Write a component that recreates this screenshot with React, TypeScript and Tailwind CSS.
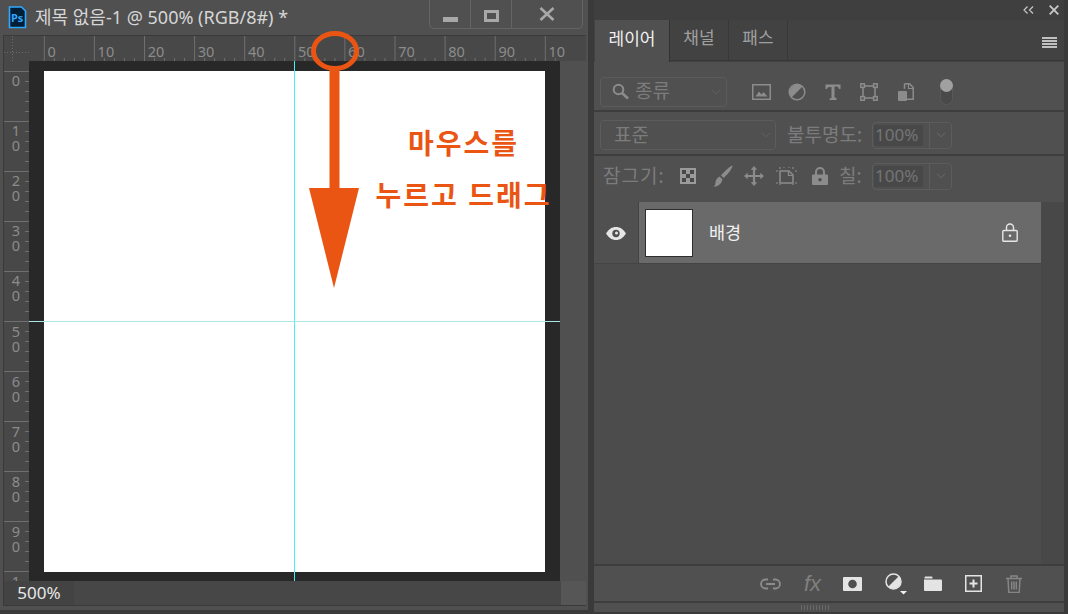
const orange = "#ea5514";

function HRuler() {
  const majors = [0, 1, 2, 3, 4, 5, 6, 7, 8, 9, 10];
  const labels = ["0", "10", "20", "30", "40", "50", "60", "70", "80", "90", "10"];
  return (
    <svg width="557" height="25" className="block">
      {Array.from({ length: 52 }).map((_, i) => (
        <line key={i} x1={15.3 + i * 10.02} x2={15.3 + i * 10.02} y1={i % 5 === 0 ? 0 : 22} y2={25} stroke="#6f6f6f" />
      ))}
      {majors.map((m) => (
        <text key={m} x={18.5 + m * 50.1} y={21} fontSize="14.5" fill="#8c8c8c">
          {labels[m]}
        </text>
      ))}
    </svg>
  );
}

function VRuler() {
  const rows = [["0"], ["1", "0"], ["2", "0"], ["3", "0"], ["4", "0"], ["5", "0"], ["6", "0"], ["7", "0"], ["8", "0"], ["9", "0"], ["1"]];
  return (
    <svg width="25" height="520" className="block shrink-0">
      {Array.from({ length: 52 }).map((_, i) => (
        <line key={i} y1={10.5 + i * 10} y2={10.5 + i * 10} x1={i % 5 === 0 ? 0 : 21} x2={25} stroke="#6f6f6f" />
      ))}
      {rows.map((r, i) =>
        r.map((d, j) => (
          <text key={`${i}-${j}`} x={12} y={25 + i * 50.1 + j * 15} fontSize="14.5" fill="#8c8c8c" textAnchor="middle">
            {d}
          </text>
        ))
      )}
    </svg>
  );
}

function Chevron({ color = "#6c6c6c" }: { color?: string }) {
  return (
    <svg width="10" height="6" viewBox="0 0 10 6" fill="none" stroke={color} strokeWidth="1">
      <path d="M1 .8l4 4 4-4" />
    </svg>
  );
}

function PercentField() {
  return (
    <div className="flex h-[27px] w-[80px] shrink-0 items-center rounded-[4px] border border-[#5c5c5c]">
      <div className="ml-[1px] flex h-[21px] w-[49px] items-center bg-[#484848] pl-[1px] text-[17px] text-[#757575]">100%</div>
      <div className="ml-[6px] h-full w-px bg-[#5c5c5c]" />
      <div className="flex flex-1 justify-center">
        <Chevron />
      </div>
    </div>
  );
}

function Tab({ label, active }: { label: string; active?: boolean }) {
  return (
    <div
      className={
        active
          ? "flex h-[42px] w-[75px] items-center justify-center border-r border-[#333333] bg-[#505050] pb-[4px] text-[17px] text-[#f0f0f0]"
          : "flex h-[41px] w-[59px] items-center justify-center border-r border-b border-[#383838] bg-[#424242] pb-[4px] text-[17px] text-[#a0a0a0]"
      }
    >
      {label}
    </div>
  );
}

const g = "#8c8c8c";

export default function App() {
  return (
    <div className="relative flex h-[614px] w-[1068px] overflow-hidden bg-[#3a3a3a] font-['Noto_Sans','Noto_Sans_CJK_KR',sans-serif]">
      {/* document window */}
      <section className="flex h-[611px] w-[590px] shrink-0 flex-col border-r-2 border-b border-[#3a3a3a] bg-[#505050] pb-[4px] pl-[3px] pr-[2px]">
        <header className="relative flex h-[35px] shrink-0 items-center pl-[5px]">
          <svg width="19" height="23" viewBox="0 0 19 23" className="shrink-0">
            <path d="M1.5 1h12l4 4v16.5h-16z" fill="#001e36" stroke="#31a8ff" strokeWidth="1.6" />
            <text x="3" y="16" fontSize="11" fontWeight="700" fill="#31a8ff">Ps</text>
          </svg>
          <span className="ml-[8px] text-[18px] whitespace-nowrap text-[#d6d6d6]">제목 없음-1 @ 500% (RGB/8#) *</span>
          <div className="absolute top-0 left-[426px] flex h-[29px] w-[154px] rounded-b-[5px] border border-t-0 border-[#646464]">
            <div className="flex w-[41px] items-end justify-center border-r border-[#646464] pb-[6px]">
              <div className="h-[5px] w-[15px] bg-[#a8a8a8]" />
            </div>
            <div className="flex w-[41px] items-end justify-center border-r border-[#646464] pb-[6px]">
              <div className="h-[12px] w-[15px] border-[3px] border-[#a8a8a8]" />
            </div>
            <div className="flex flex-1 items-end justify-center pr-[1px] pb-[7px]">
              <svg width="16" height="14" viewBox="0 0 16 14" stroke="#a8a8a8" strokeWidth="2.6">
                <path d="M1.5 1l13 12M14.5 1l-13 12" />
              </svg>
            </div>
          </div>
        </header>

        <div className="flex min-h-0 flex-1 flex-col border-t border-l border-[#3a3a3a]">
          <div className="flex h-[25px] shrink-0 bg-[#484848]">
            <svg width="25" height="25" className="shrink-0">
              <path d="M8.5 0v25M0 16.5h25" stroke="#6c6c6c" strokeDasharray="1 2" />
            </svg>
            <HRuler />
          </div>
          <div className="flex min-h-0 flex-1">
            <div className="bg-[#484848]">
              <VRuler />
            </div>
            <div className="relative flex h-[520px] w-[531px] shrink-0 items-center justify-center bg-[#282828]">
              <div className="h-[501px] w-[501px] bg-white" />
              <div className="absolute top-0 left-[265px] h-full w-px bg-[#45f0f0]" />
              <div className="absolute top-[260px] left-0 h-px w-full bg-[#a9e6e6]" />
            </div>
            <div className="flex-1 bg-[#505050]" />
          </div>
          <div className="flex h-[25px] shrink-0 border-b border-[#3a3a3a] bg-[#474747]">
            <div className="flex w-[70px] items-center justify-center bg-[#434343] text-[17px] text-[#e8e8e8]">500%</div>
            <div className="flex-1" />
            <div className="w-[25px] bg-[#565656]" />
          </div>
        </div>
      </section>

      {/* layers panel */}
      <aside className="ml-[4px] flex h-[612px] w-[470px] shrink-0 flex-col bg-[#505050]">
        <div className="flex h-[20px] shrink-0 items-center justify-end gap-[15px] bg-[#3f3f3f] pr-[5px]">
          <svg width="11" height="8" viewBox="0 0 11 8" fill="none" stroke="#c8c8c8" strokeWidth="1.2">
            <path d="M4.5 .5L1 4l3.5 3.5M10 .5L6.5 4 10 7.5" />
          </svg>
          <svg width="10" height="10" viewBox="0 0 10 10" stroke="#c8c8c8" strokeWidth="1.8">
            <path d="M.7.7l8.6 8.6M9.3.7L.7 9.3" />
          </svg>
        </div>
        <div className="flex h-[42px] shrink-0 items-start bg-[#424242]">
          <div className="w-[1px] self-stretch" />
          <Tab label="레이어" active />
          <Tab label="채널" />
          <Tab label="패스" />
          <div className="h-[41px] flex-1 border-b border-[#383838]" />
          <div className="absolute top-[37px] left-[1042px] flex w-[15px] flex-col gap-[1px]">
            <div className="h-[2px] bg-[#c0c0c0]" />
            <div className="h-[2px] bg-[#c0c0c0]" />
            <div className="h-[2px] bg-[#c0c0c0]" />
            <div className="h-[2px] bg-[#c0c0c0]" />
          </div>
        </div>

        {/* filter */}
        <div className="flex h-[50px] shrink-0 items-center border-b-2 border-[#3d3d3d] pt-[11px] pl-[6px]">
          <div className="flex h-[30px] w-[127px] shrink-0 items-center rounded-[4px] border border-[#5c5c5c] pl-[11px] pr-[5px] text-[19px] text-[#7c7c7c]">
            <svg width="17" height="17" viewBox="0 0 17 17" fill="none" stroke={g} strokeWidth="2" className="shrink-0">
              <circle cx="6.5" cy="6.5" r="4.8" />
              <path d="M10 10l6 5.5" strokeWidth="2.6" />
            </svg>
            <span className="ml-[6px] flex-1">종류</span>
            <Chevron color="#626262" />
          </div>
          <svg width="19" height="16" viewBox="0 0 19 16" className="ml-[25px] shrink-0">
            <rect x=".75" y=".75" width="17.5" height="14.5" fill="none" stroke={g} strokeWidth="1.5" />
            <path d="M3.5 12.5l3.5-5 2.5 3 2-2.5 4 4.5z" fill={g} />
          </svg>
          <svg width="18" height="18" viewBox="0 0 18 18" className="ml-[17px] shrink-0">
            <circle cx="9" cy="9" r="7.8" fill="none" stroke={g} strokeWidth="1.5" />
            <path d="M14.5 3.5A7.8 7.8 0 0 0 3.5 14.5z" fill={g} />
          </svg>
          <svg width="16" height="16" viewBox="0 0 16 16" className="ml-[19px] shrink-0" fill={g}>
            <path d="M.5.5h15v4.5h-1.500c-.3-1.700-1-2.500-2.500-2.500H9.500v11l2 .6V16h-7v-1.400l2-.6v-11H4.500C3 3 2.300 3.800 2 5H.5z" />
          </svg>
          <svg width="18" height="18" viewBox="0 0 18 18" fill="none" stroke={g} strokeWidth="1.5" className="ml-[19px] shrink-0">
            <path d="M3 3h12v12H3z" />
            <rect x=".8" y=".8" width="3.6" height="3.6" fill="#505050" />
            <rect x="13.600" y=".8" width="3.6" height="3.6" fill="#505050" />
            <rect x=".8" y="13.600" width="3.6" height="3.6" fill="#505050" />
            <rect x="13.600" y="13.600" width="3.6" height="3.6" fill="#505050" />
          </svg>
          <svg width="16" height="18" viewBox="0 0 16 18" className="ml-[20px] shrink-0">
            <path d="M6.5.8h5l3.700 3.700v11.700H8" fill="none" stroke={g} strokeWidth="1.5" />
            <path d="M6.500 .8v5" stroke={g} strokeWidth="1.5" />
            <path d="M10.500 1v4.500h4.500" fill="none" stroke={g} strokeWidth="1.2" />
            <rect x="0" y="8" width="9" height="10" rx="1" fill={g} />
          </svg>
          <div className="relative ml-[26px] h-[26px] w-[13px] shrink-0 rounded-full border border-[#595959] bg-[#494949]">
            <div className="absolute -top-px -left-px h-[13px] w-[13px] rounded-full bg-[#a0a0a0]" />
          </div>
        </div>

        {/* blend mode */}
        <div className="flex h-[44px] shrink-0 items-center border-b-2 border-[#3d3d3d] pt-[4px] pl-[6px] text-[#7c7c7c]">
          <div className="flex h-[30px] w-[176px] shrink-0 items-center justify-between rounded-[4px] border border-[#5c5c5c] pr-[4px] pl-[13px] text-[19px]">
            <span>표준</span>
            <Chevron color="#626262" />
          </div>
          <span className="ml-[11px] w-[85px] shrink-0 text-[19px] whitespace-nowrap">불투명도:</span>
          <PercentField />
        </div>

        {/* lock row */}
        <div className="flex h-[46px] shrink-0 items-center pb-[6px] pl-[9px] text-[#7c7c7c]">
          <span className="w-[77px] shrink-0 text-[19px] tracking-[1px] whitespace-nowrap">잠그기:</span>
          <svg width="16" height="16" viewBox="0 0 16 16" className="shrink-0">
            <rect width="16" height="16" fill="#9a9a9a" />
            <path d="M2 2h4v4H2zM10 2h4v4h-4zM6 6h4v4H6zM2 10h4v4H2zM10 10h4v4h-4z" fill="#484848" />
          </svg>
          <svg width="20" height="22" viewBox="0 0 20 22" fill={g} className="ml-[17px] shrink-0">
            <path d="M19.500.5c.3 2-3.600 7.500-8.800 12.500l-2.800-2.700C12 6 17.700.6 19.500.5z" />
            <path d="M6.600 11.500l2.800 2.700c-.4 4.300-4.300 7.500-9 7.500 2.500-1.500 1.500-3 2.500-6 .7-2 2-3.400 3.700-4.200z" />
          </svg>
          <svg width="20" height="20" viewBox="0 0 20 20" fill={g} className="ml-[11px] shrink-0">
            <path d="M10 0l3.300 3.700h-2.200v5.200h5.200V6.700L20 10l-3.700 3.300v-2.200h-5.200v5.200h2.200L10 20l-3.300-3.700h2.200v-5.200H3.700v2.200L0 10l3.700-3.300v2.200h5.200V3.700H6.700z" />
          </svg>
          <svg width="21" height="18" viewBox="0 0 21 18" fill="none" stroke={g} className="ml-[12px] shrink-0">
            <path d="M4 4h9l4 4v8H4z" strokeWidth="1.5" />
            <path d="M0 4h2M19 4h2M0 16h2M19 16h2M4 0v2M17 0v2M4 18v-1M17 18v-1M7 0h2M12 0h2" strokeWidth="1.2" />
            <path d="M12.500 4.500v4h4" strokeWidth="1.2" />
          </svg>
          <svg width="16" height="18" viewBox="0 0 16 18" className="ml-[15px] shrink-0">
            <path d="M4 8V5a4 4 0 0 1 8 0v3" fill="none" stroke={g} strokeWidth="2" />
            <path d="M1 7.500h14a1 1 0 0 1 1 1V17a1 1 0 0 1-1 1H1a1 1 0 0 1-1-1V8.500a1 1 0 0 1 1-1z" fill={g} />
            <circle cx="8" cy="12.700" r="1.800" fill="#505050" />
          </svg>
          <span className="ml-[11px] w-[33px] shrink-0 text-[19px] whitespace-nowrap">칠:</span>
          <PercentField />
        </div>

        {/* layer list */}
        <div className="flex min-h-0 flex-1 bg-[#4c4c4c]">
          <div className="flex h-[62px] w-[447px] shrink-0 border-b border-[#444444]">
            <div className="flex w-[45px] shrink-0 items-center justify-center border-r border-[#444444] bg-[#505050]">
              <svg width="20" height="13" viewBox="0 0 20 13" className="mt-[1px]">
                <path d="M0 6.500C3 2 6 0 10 0s7 2 10 6.500C17 11 14 13 10 13S3 11 0 6.500z" fill="#e6e6e6" />
                <circle cx="10" cy="6.500" r="3.700" fill="#505050" />
                <circle cx="10.500" cy="6" r="1.500" fill="#e6e6e6" />
              </svg>
            </div>
            <div className="flex flex-1 items-center bg-[#6a6a6a] pl-[6px]">
              <div className="h-[48px] w-[48px] shrink-0 border border-[#2e2e2e] bg-white" />
              <span className="ml-[16px] flex-1 text-[17.5px] text-[#f0f0f0]">배경</span>
              <svg width="16" height="19" viewBox="0 0 16 19" className="mr-[23px] shrink-0" fill="none" stroke="#e6e6e6" strokeWidth="1.4">
                <path d="M4.500 7.500V4.500a3.500 3.500 0 0 1 7 0v3" />
                <rect x=".8" y="7.500" width="14.400" height="10.700" rx="1" />
                <circle cx="8" cy="12.800" r="1.300" fill="#e6e6e6" stroke="none" />
              </svg>
            </div>
          </div>
          <div className="h-full flex-1 bg-[#484848]" />
        </div>

        {/* footer */}
        <div className="flex h-[39px] shrink-0 items-center border-y-2 border-[#3d3d3d] pl-[166px]">
          <svg width="21" height="12" viewBox="0 0 21 12" fill="none" stroke={g} strokeWidth="1.800" className="shrink-0">
            <path d="M8 1.500H5.500a4.500 4.500 0 0 0 0 9H8M13 1.500h2.500a4.500 4.500 0 0 1 0 9H13M6 6h9" />
          </svg>
          <span className="ml-[23px] w-[39px] shrink-0 font-['Liberation_Sans',sans-serif] text-[22px] leading-none text-[#808080] italic">fx</span>
          <svg width="19" height="14" viewBox="0 0 19 14" className="shrink-0">
            <rect width="19" height="14" rx="1" fill="#e4e4e4" />
            <circle cx="9.500" cy="7" r="4.300" fill="#505050" />
          </svg>
          <svg width="22" height="22" viewBox="0 0 22 22" className="ml-[23px] shrink-0">
            <circle cx="8.500" cy="8.500" r="7.500" fill="none" stroke="#e4e4e4" strokeWidth="1.500" />
            <path d="M13.800 3.200A7.500 7.500 0 0 1 3.200 13.800z" fill="#e4e4e4" />
            <path d="M15 18h7l-3.500 3.500z" fill="#f0f0f0" />
          </svg>
          <svg width="18" height="15" viewBox="0 0 18 15" className="ml-[17px] shrink-0" fill="#e4e4e4">
            <path d="M.5 2.500V1.500a1 1 0 0 1 1-1h6a1 1 0 0 1 1 1v1z" />
            <path d="M0 3.500h17a1 1 0 0 1 1 1V14a1 1 0 0 1-1 1H1a1 1 0 0 1-1-1z" />
          </svg>
          <svg width="17" height="17" viewBox="0 0 17 17" className="ml-[23px] shrink-0" fill="none" stroke="#e4e4e4">
            <rect x=".75" y=".75" width="15.500" height="15.500" strokeWidth="1.500" />
            <path d="M8.500 4.500v8M4.500 8.500h8" strokeWidth="2" />
          </svg>
          <svg width="16" height="18" viewBox="0 0 16 18" className="ml-[24px] shrink-0" fill="none" stroke="#858585" strokeWidth="1.500">
            <path d="M0 3.500h16M5 3.500V1h6v2.500M2 3.500l.8 14h10.400l.8-14M5.700 6.500v8M8 6.500v8M10.300 6.500v8" />
          </svg>
        </div>
        <div className="flex h-[9px] shrink-0 items-center justify-center pr-[28px]">
          <div className="h-[5px] w-[29px] bg-[repeating-linear-gradient(90deg,#6a6a6a_0,#6a6a6a_1px,transparent_1px,transparent_3px)]" />
        </div>
      </aside>

      {/* annotation drawn on top of the screenshot */}
      <svg width="60" height="262" viewBox="0 0 60 262" className="absolute top-[29px] left-[305px]">
        <ellipse cx="30" cy="22" rx="21.500" ry="17.500" fill="none" stroke={orange} strokeWidth="5" />
        <path d="M24.500 40h10v120h-10z" fill={orange} />
        <path d="M4 159h50l-25 100z" fill={orange} />
      </svg>
      <div className="absolute top-[125px] left-[376px] flex w-[175px] flex-col items-center gap-[16px] text-[28px] leading-[36px] font-bold whitespace-nowrap text-[#ea5514]">
        <span className="tracking-[2px]">마우스를</span>
        <span className="tracking-[2px]">누르고 드래그</span>
      </div>
    </div>
  );
}
